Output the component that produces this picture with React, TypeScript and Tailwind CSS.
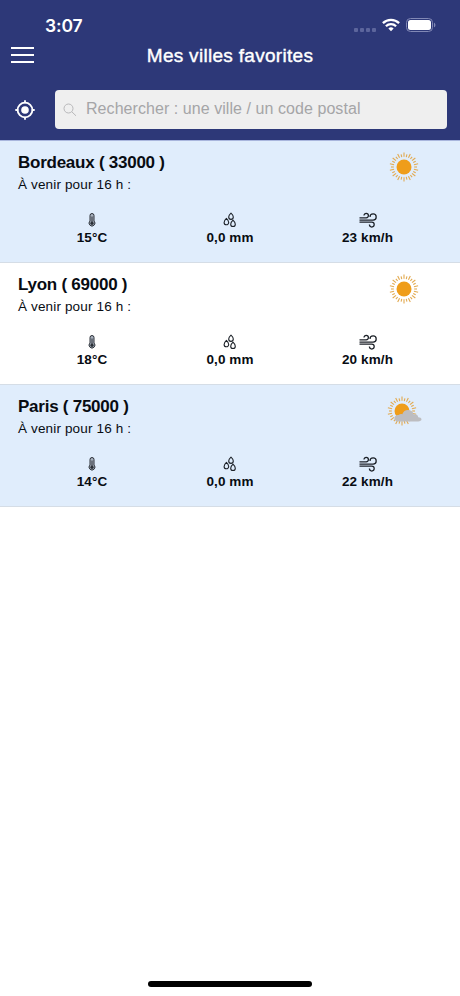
type Sky = 'sun' | 'cloudy';

interface City {
  name: string;
  zip: string;
  sky: Sky;
  temp: string;
  rain: string;
  wind: string;
}

const cities: City[] = [
  { name: 'Bordeaux', zip: '33000', sky: 'sun', temp: '15°C', rain: '0,0 mm', wind: '23 km/h' },
  { name: 'Lyon', zip: '69000', sky: 'sun', temp: '18°C', rain: '0,0 mm', wind: '20 km/h' },
  { name: 'Paris', zip: '75000', sky: 'cloudy', temp: '14°C', rain: '0,0 mm', wind: '22 km/h' },
];

const rays = Array.from({ length: 28 }, (_, i) => i);

function SkyIcon({ sky }: { sky: Sky }) {
  const cx = sky === 'sun' ? 18 : 16;
  return (
    <svg width="36" height="30" viewBox="0 0 36 30">
      <g stroke="#e2aa50" strokeWidth="1.1">
        {rays.map((i) => (
          <line
            key={i}
            x1={cx}
            x2={cx}
            y1={i % 2 ? 2 : 0.5}
            y2="4.8"
            transform={`rotate(${(i * 360) / 28} ${cx} 15)`}
          />
        ))}
      </g>
      <circle cx={cx} cy="15" r="7.5" fill="#ef9d1a" />
      {sky === 'cloudy' && (
        <path
          d="M12 25.4c-2.3 0-3.6-1.5-3.6-3.2 0-2.2 1.9-3.6 4.3-3.2.9-.9 2.3-1.3 3.6-.8.9-2.7 3.3-4.3 6-4.1 3 .2 4.8 2 5.4 4.3 2.7-.5 4.3.9 4.5 2.8 1.8.1 3.3.8 3.3 2.1 0 1.4-1.5 2.1-3.3 2.1z"
          fill="#bdbdc0"
        />
      )}
    </svg>
  );
}

function ThermometerIcon() {
  return (
    <svg width="8" height="14" viewBox="0 0 8 14" fill="none" stroke="#2a2f36" strokeWidth="1">
      <path d="M2 8V2.500a2 2 0 0 1 4 0V8a2.900 2.900 0 1 1-4 0z" fill="#a9b2bf" />
      <path d="M4 3.5v6" />
      <circle cx="4" cy="10.2" r="1.2" fill="#2a2f36" />
    </svg>
  );
}

function DropsIcon() {
  return (
    <svg width="14" height="16" viewBox="0 0 14 16" fill="none" stroke="#1c2128" strokeWidth="1.1">
      <path d="M8 1.2c1.4 1.3 2.3 2.5 2.3 3.9a2.3 2.3 0 0 1-4.6 0c0-1.4.9-2.6 2.3-3.9z" />
      <path d="M3.4 6.400c1.400 1.300 2.300 2.600 2.300 4a2.300 2.300 0 0 1-4.600 0c0-1.400.9-2.700 2.300-4z" />
      <path d="M10 8.200c1.400 1.300 2.300 2.600 2.300 4a2.300 2.300 0 0 1-4.600 0c0-1.400.9-2.700 2.300-4z" />
    </svg>
  );
}

function WindIcon() {
  return (
    <svg width="20" height="16" viewBox="0 0 20 16" fill="none" stroke="#1c2128" strokeWidth="1.25">
      <path d="M1.5 5.8h6.700a2.200 2.200 0 1 0-2.200-2.200" />
      <path d="M1.5 8h13.600a3.100 3.100 0 1 0-3.100-3.100" />
      <path d="M1.5 10.200h12.300a2.400 2.400 0 1 1-2.400 2.400" />
    </svg>
  );
}

function StatusBar() {
  return (
    <div className="flex h-[42px] items-start justify-between pl-[45px] pr-[24px]">
      <span className="pt-[14px] font-['Inter',sans-serif] text-[17.5px] font-semibold leading-[24px] tracking-[-0.1px]">
        3:07
      </span>
      <div className="flex items-center pt-[18px]">
        <div className="mr-[6px] flex gap-[2px] pt-[9px]">
          <i className="size-[4px] rounded-[1px] bg-[#5c659c]" />
          <i className="size-[4px] rounded-[1px] bg-[#5c659c]" />
          <i className="size-[4px] rounded-[1px] bg-[#5c659c]" />
          <i className="size-[4px] rounded-[1px] bg-[#5c659c]" />
        </div>
        <svg width="18" height="14" viewBox="0 0 18 14" fill="none" stroke="#fff" strokeWidth="2.3">
          <path d="M.9 5.1a11.6 11.6 0 0 1 16.2 0" />
          <path d="M3.9 8.3a7.3 7.3 0 0 1 10.2 0" />
          <path d="M9 13.2 6.4 10.6a3.7 3.7 0 0 1 5.2 0z" fill="#fff" stroke="none" />
        </svg>
        <svg className="ml-[6px]" width="30" height="14" viewBox="0 0 30 14">
          <rect x=".5" y=".5" width="26" height="13" rx="4" fill="none" stroke="#8188b5" />
          <rect x="2" y="2" width="23" height="10" rx="2.5" fill="#fff" />
          <path d="M28 4.7c1.9.6 1.9 4 0 4.6z" fill="#8188b5" />
        </svg>
      </div>
    </div>
  );
}

function Header() {
  return (
    <header className="h-[141px] border-b border-[#a9b6dd] bg-[#2d3878] text-white">
      <StatusBar />
      <div className="grid h-[28px] grid-cols-[60px_1fr_60px] items-center">
        <button className="ml-[11px] flex w-[23px] flex-col gap-[5px] pb-[2px]" aria-label="Menu">
          <span className="h-[2px] w-full bg-white" />
          <span className="h-[2px] w-full bg-white" />
          <span className="h-[2px] w-full bg-white" />
        </button>
        <h1 className="whitespace-nowrap text-center text-[19px] leading-[28px] tracking-[0.3px] [-webkit-text-stroke:0.4px_white]">
          Mes villes favorites
        </h1>
      </div>
      <div className="flex items-center pl-[15px] pr-[13px] pt-[20px]">
        <svg width="20" height="20" viewBox="0 0 20 20" fill="none" stroke="#fff" strokeWidth="1.8">
          <circle cx="10" cy="10" r="7.4" />
          <circle cx="10" cy="10" r="3.8" fill="#fff" stroke="none" />
          <path d="M10 .3v3M10 16.7v3M.3 10h3M16.7 10h3" />
        </svg>
        <label className="ml-[19.5px] flex h-[39px] flex-1 items-center rounded-[4px] bg-[#efefef] pl-[8px] text-[#a5a5a7]">
          <svg width="14" height="14" viewBox="0 0 14 14" fill="none" stroke="#b8b8ba" strokeWidth="1">
            <circle cx="5.5" cy="5.5" r="4.5" />
            <path d="m8.8 8.8 4.2 4" />
          </svg>
          <span className="ml-[9.5px] pb-[2px] text-[16px] leading-[20px] tracking-[0.06px]">
            Rechercher : une ville / un code postal
          </span>
        </label>
      </div>
    </header>
  );
}

function CityRow({ city }: { city: City }) {
  return (
    <li className="h-[122px] border-b border-[#d5dde6] odd:bg-[#e0edfc] even:bg-white">
      <div className="flex justify-between pl-[18px] pr-[38px] pt-[11px]">
        <div>
          <h2 className="text-[17px] font-bold leading-[21px] tracking-[-0.25px]">
            {city.name} ( {city.zip} )
          </h2>
          <p className="pt-[2px] text-[13.5px] leading-[20px] tracking-[0.15px]">À venir pour 16 h :</p>
        </div>
        <SkyIcon sky={city.sky} />
      </div>
      <div className="mt-[16px] grid grid-cols-3 px-[23px] text-[13.5px] font-bold leading-[18px] tracking-[0.1px]">
        <div className="flex flex-col items-center">
          <span className="flex h-[18px] items-center"><ThermometerIcon /></span>
          {city.temp}
        </div>
        <div className="flex flex-col items-center">
          <span className="flex h-[18px] items-center"><DropsIcon /></span>
          {city.rain}
        </div>
        <div className="flex flex-col items-center pr-[1px]">
          <span className="flex h-[18px] items-center"><WindIcon /></span>
          {city.wind}
        </div>
      </div>
    </li>
  );
}

export default function App() {
  return (
    <div className="flex h-[996px] w-[460px] flex-col overflow-hidden bg-white font-['Liberation_Sans',Arial,sans-serif] text-[#080c12]">
      <Header />
      <ul className="flex-1">
        {cities.map((city) => (
          <CityRow key={city.zip} city={city} />
        ))}
      </ul>
      <div className="mx-auto mb-[9px] h-[6px] w-[164px] rounded-full bg-black" />
    </div>
  );
}
